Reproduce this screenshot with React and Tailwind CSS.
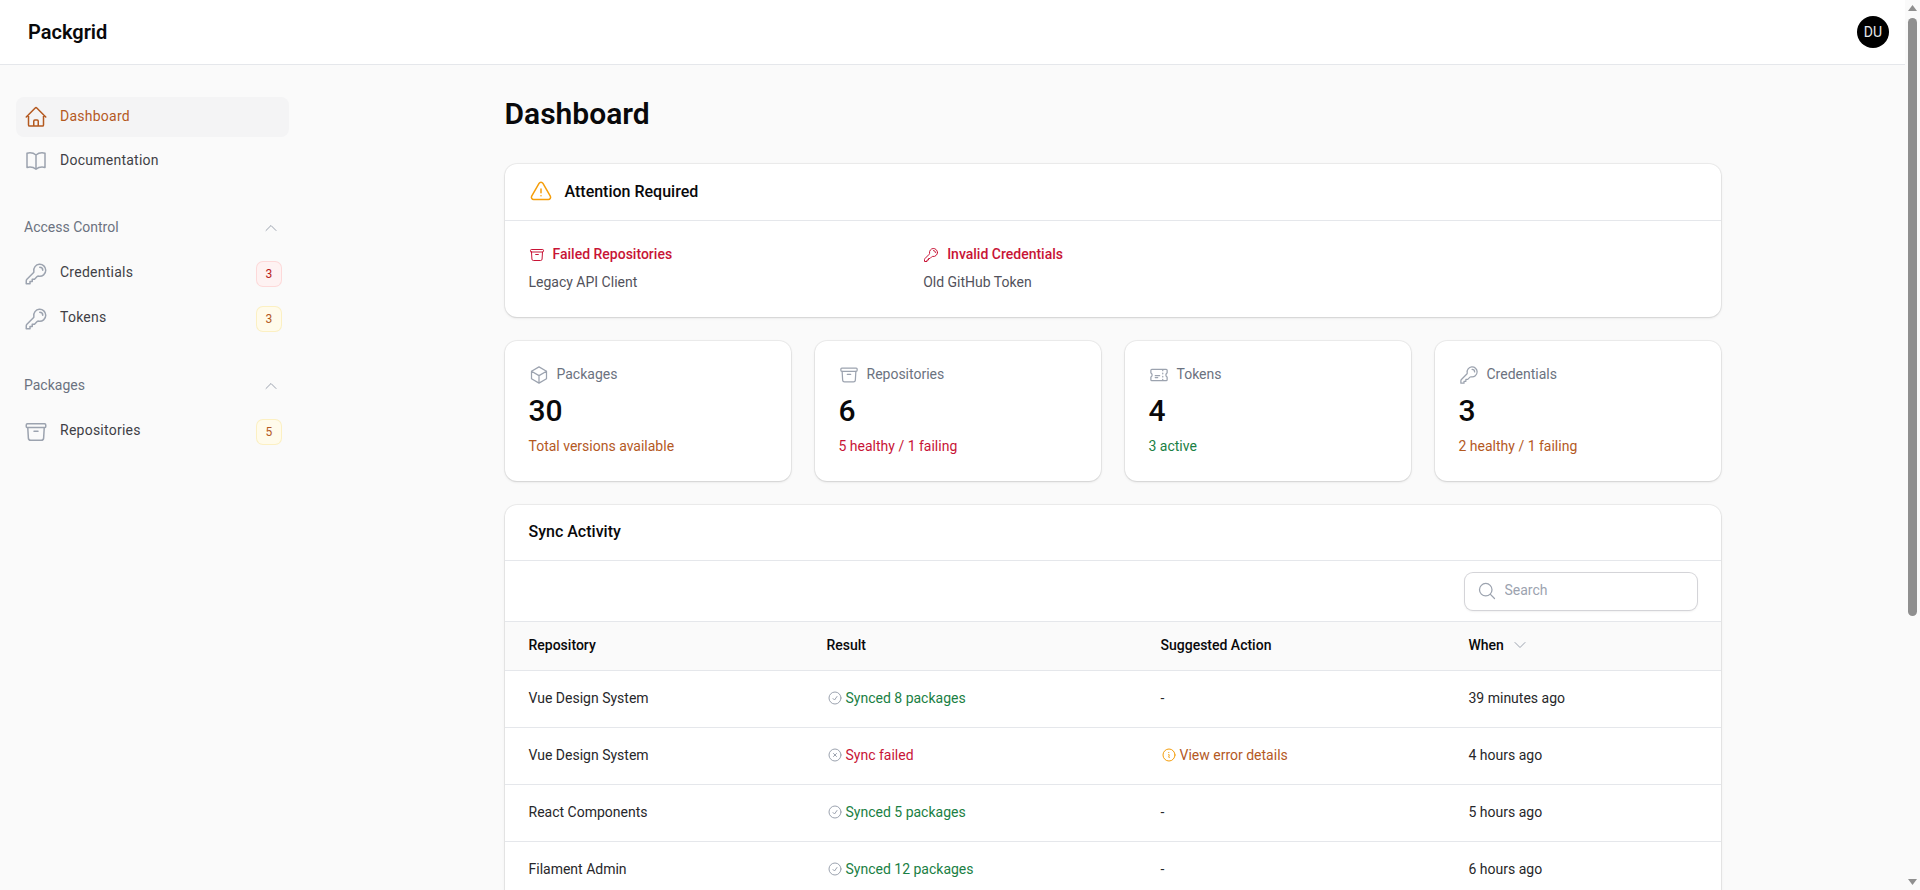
import {
  HiOutlineHome,
  HiOutlineBookOpen,
  HiOutlineKey,
  HiOutlineArchiveBox,
  HiOutlineCube,
  HiOutlineTicket,
  HiOutlineExclamationTriangle,
  HiOutlineCheckCircle,
  HiOutlineXCircle,
  HiOutlineInformationCircle,
  HiOutlineMagnifyingGlass,
  HiOutlineChevronUp,
  HiOutlineChevronDown,
} from "react-icons/hi2";

const stats = [
  { label: "Packages", value: "30", note: "Total versions available", color: "text-[#b4591f]", Icon: HiOutlineCube },
  { label: "Repositories", value: "6", note: "5 healthy / 1 failing", color: "text-[#c81436]", Icon: HiOutlineArchiveBox },
  { label: "Tokens", value: "4", note: "3 active", color: "text-[#1a8044]", Icon: HiOutlineTicket },
  { label: "Credentials", value: "3", note: "2 healthy / 1 failing", color: "text-[#b4591f]", Icon: HiOutlineKey },
];

const rows = [
  { repo: "Vue Design System", result: "Synced 8 packages", ok: true, when: "39 minutes ago" },
  { repo: "Vue Design System", result: "Sync failed", ok: false, when: "4 hours ago" },
  { repo: "React Components", result: "Synced 5 packages", ok: true, when: "5 hours ago" },
  { repo: "Filament Admin", result: "Synced 12 packages", ok: true, when: "6 hours ago" },
  { repo: "Filament Admin", result: "Synced 3 packages", ok: true, when: "8 hours ago" },
  { repo: "React Components", result: "Synced 2 packages", ok: true, when: "10 hours ago" },
];

// Sidebar row with optional count badge
function NavItem({ Icon, label, badge, active }) {
  return (
    <a
      className={`flex items-center gap-3 px-2 rounded-lg text-sm font-[450] tracking-[0.25px] ${
        badge ? "h-[41px]" : "h-10"
      } ${active ? "bg-[#f4f4f5] text-[#b4591f]" : "text-[#3f3f46]"}`}
    >
      <Icon className={`w-6 h-6 shrink-0 ${active ? "text-[#b4591f]" : "text-[#9ca3af]"}`} />
      <span className="flex-1 pb-[3px]">{label}</span>
      {badge}
    </a>
  );
}

function Badge({ children, tone }) {
  return (
    <span
      className={`flex items-center justify-center w-6 h-6 rounded-md text-xs ring-1 ${
        tone === "red"
          ? "bg-[#fef2f2] text-[#b91c1c] ring-[#fecaca]/70"
          : "bg-[#fffbeb] text-[#b4591f] ring-[#fde68a]/50"
      }`}
    >
      {children}
    </span>
  );
}

function NavGroup({ label, className, children }) {
  return (
    <div className={className}>
      <div className="flex items-center justify-between pl-2 pr-[10px] h-5 mb-[15px]">
        <span className="pb-[2px] text-sm text-[#6b7280]">{label}</span>
        <HiOutlineChevronUp className="w-4 h-4 text-[#9ca3af]" />
      </div>
      <div className="flex flex-col gap-1">{children}</div>
    </div>
  );
}

function Sidebar() {
  return (
    <aside className="w-[320px] shrink-0 pt-8 pl-4 pr-[31px]">
      <div className="flex flex-col gap-1">
        <NavItem Icon={HiOutlineHome} label="Dashboard" active />
        <NavItem Icon={HiOutlineBookOpen} label="Documentation" />
      </div>
      <NavGroup label="Access Control" className="mt-[37px]">
        <NavItem Icon={HiOutlineKey} label="Credentials" badge={<Badge tone="red">3</Badge>} />
        <NavItem Icon={HiOutlineKey} label="Tokens" badge={<Badge>3</Badge>} />
      </NavGroup>
      <NavGroup label="Packages" className="mt-[37px]">
        <NavItem Icon={HiOutlineArchiveBox} label="Repositories" badge={<Badge>5</Badge>} />
      </NavGroup>
    </aside>
  );
}

function AttentionItem({ Icon, title, detail }) {
  return (
    <div>
      <div className="flex items-center gap-2 h-5 text-sm font-medium text-[#c81436]">
        <Icon className="w-4 h-4" />
        <span className="pb-[2px]">{title}</span>
      </div>
      <p className="mt-[7px] mb-px text-sm text-[#52525b]">{detail}</p>
    </div>
  );
}

function AttentionCard() {
  return (
    <section className="bg-white rounded-xl shadow-sm ring-1 ring-black/5">
      <div className="flex items-center gap-3 h-14 px-6">
        <HiOutlineExclamationTriangle className="w-6 h-6 text-[#f59e0b]" />
        <h2 className="text-base font-medium text-[#09090b]">Attention Required</h2>
      </div>
      <div className="grid grid-cols-3 gap-4 p-6 border-t border-[#e5e7eb]">
        <AttentionItem Icon={HiOutlineArchiveBox} title="Failed Repositories" detail="Legacy API Client" />
        <AttentionItem Icon={HiOutlineKey} title="Invalid Credentials" detail="Old GitHub Token" />
      </div>
    </section>
  );
}

function StatCard({ stat }) {
  const { Icon } = stat;
  return (
    <div className="bg-white rounded-xl shadow-sm ring-1 ring-black/5 p-6">
      <div className="flex items-center gap-2 text-sm text-[#6b7280] h-5">
        <Icon className="w-5 h-5 text-[#9ca3af]" />
        <span className="pb-[2px]">{stat.label}</span>
      </div>
      <div className="mt-2 text-3xl font-medium text-[#09090b]">{stat.value}</div>
      <div className={`mt-[7px] mb-px text-sm ${stat.color}`}>{stat.note}</div>
    </div>
  );
}

function ActivityTable() {
  return (
    <section className="bg-white rounded-xl shadow-sm ring-1 ring-black/5 overflow-hidden">
      <div className="flex items-center h-[55px] px-6">
        <h2 className="pb-[2px] text-base font-medium text-[#09090b]">Sync Activity</h2>
      </div>
      <div className="flex justify-end items-center h-[61px] px-6 border-t border-[#e5e7eb]">
        <label className="flex items-center gap-2 w-[232px] h-[37px] px-3 rounded-lg bg-white shadow-sm ring-1 ring-[#d4d4d8]">
          <HiOutlineMagnifyingGlass className="w-5 h-5 shrink-0 text-[#9ca3af]" />
          <input placeholder="Search" className="w-full pb-[2px] text-sm outline-none placeholder:text-[#9ca3af]" />
        </label>
      </div>
      <table className="w-full table-fixed text-sm text-left border-t border-[#e5e7eb]">
        <colgroup>
          <col className="w-[298px]" />
          <col className="w-[334px]" />
          <col className="w-[308px]" />
          <col />
        </colgroup>
        <thead className="bg-[#fafafa]">
          <tr className="h-[49px] text-[#09090b]">
            <th className="px-6 pb-[2px] font-medium">Repository</th>
            <th className="px-6 pb-[2px] font-medium">Result</th>
            <th className="px-6 pb-[2px] font-medium">Suggested Action</th>
            <th className="px-6 pb-[2px] font-medium">
              <span className="flex items-center gap-2">
                When
                <HiOutlineChevronDown className="w-4 h-4 text-[#9ca3af]" />
              </span>
            </th>
          </tr>
        </thead>
        <tbody>
          {rows.map((row, i) => (
            <tr key={i} className="h-[57px] border-t border-[#e5e7eb] text-[#27272a]">
              <td className="px-6 pb-[2px]">{row.repo}</td>
              <td className="px-6 pb-[2px]">
                <span className={`flex items-center gap-[3px] ${row.ok ? "text-[#1a8044]" : "text-[#c81436]"}`}>
                  {row.ok ? (
                    <HiOutlineCheckCircle className="w-4 h-4 text-[#9ca3af]" />
                  ) : (
                    <HiOutlineXCircle className="w-4 h-4 text-[#9ca3af]" />
                  )}
                  {row.result}
                </span>
              </td>
              <td className="px-6 pb-[2px]">
                {row.ok ? (
                  "-"
                ) : (
                  <span className="flex items-center gap-[3px] text-[#b4591f]">
                    <HiOutlineInformationCircle className="w-4 h-4 text-[#f59e0b]" />
                    View error details
                  </span>
                )}
              </td>
              <td className="px-6 pb-[2px]">{row.when}</td>
            </tr>
          ))}
        </tbody>
      </table>
    </section>
  );
}

// The browser's own scrollbar is not shown in the capture, so draw it
function ScrollStrip() {
  return (
    <div className="flex flex-col items-center w-[15px] shrink-0 h-full bg-[#fafafa]">
      <svg viewBox="0 0 9 6" className="w-[9px] h-[6px] mt-[5px] shrink-0 fill-[#8f8f8f]">
        <path d="M4.5 0 9 6H0z" />
      </svg>
      <div className="w-[9px] h-[598px] mt-[7px] rounded-full bg-[#8f8f8f]" />
      <svg viewBox="0 0 9 6" className="w-[9px] h-[6px] mt-auto mb-[5px] shrink-0 fill-[#8f8f8f]">
        <path d="M0 0h9L4.5 6z" />
      </svg>
    </div>
  );
}

export default function App() {
  return (
    <div className="flex h-screen overflow-hidden bg-[#fafafa] font-['Roboto',sans-serif]">
      <div className="flex-1 min-w-0 h-full overflow-hidden">
        <header className="flex items-center justify-between h-[65px] pl-[28px] pr-4 bg-white border-b border-[#e5e7eb]">
          <span className="text-xl font-semibold text-[#09090b]">Packgrid</span>
          <div className="flex items-center justify-center w-8 h-8 rounded-full bg-black text-sm text-[#e5e7eb]">DU</div>
        </header>
        <div className="flex">
          <Sidebar />
          <main className="flex-1 min-w-0">
            <div className="max-w-[1280px] mx-auto px-8 pt-[31px] pb-8">
              <h1 className="text-3xl font-semibold text-[#09090b] mb-8">Dashboard</h1>
              <div className="flex flex-col gap-6">
                <AttentionCard />
                <div className="grid grid-cols-4 gap-6">
                  {stats.map((s) => (
                    <StatCard key={s.label} stat={s} />
                  ))}
                </div>
                <ActivityTable />
              </div>
            </div>
          </main>
        </div>
      </div>
      <ScrollStrip />
    </div>
  );
}
